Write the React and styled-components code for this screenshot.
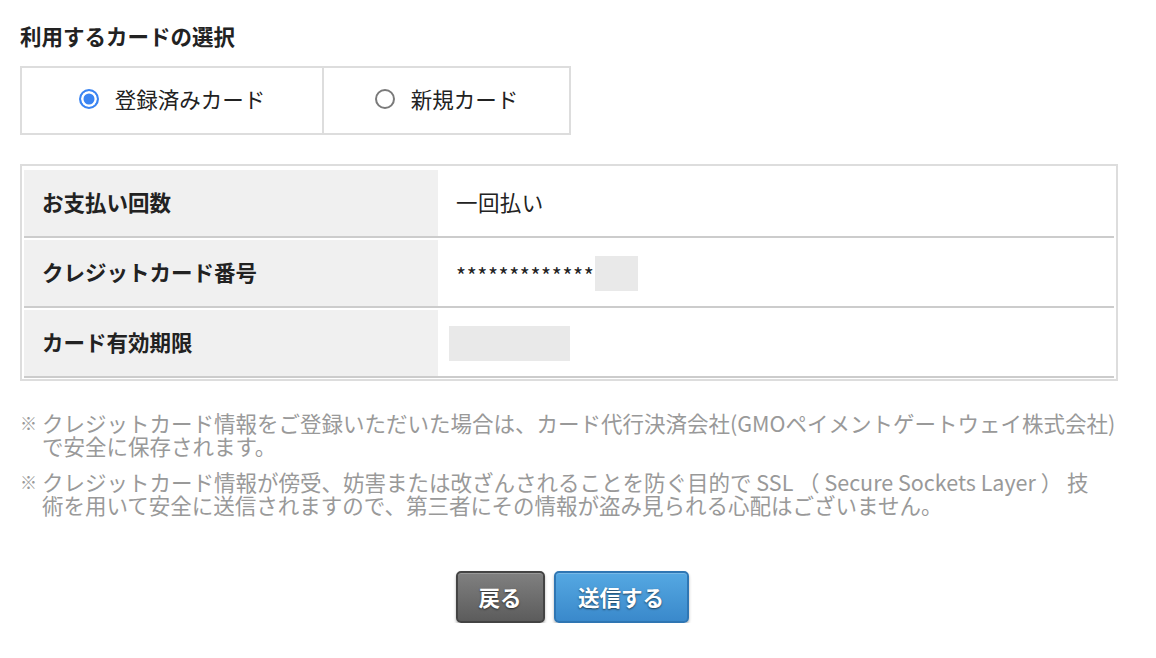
import React, { useState } from "react";
import styled, { createGlobalStyle } from "styled-components";

const GlobalStyle = createGlobalStyle`
  body {
    margin: 0;
    background: #fff;
    font-family: "Noto Sans CJK JP", "Noto Sans", sans-serif;
    color: #222;
  }
`;

const rows = [
  { label: "お支払い回数", value: "一回払い" },
  { label: "クレジットカード番号", value: "*************", masked: 43, shift: 1 },
  { label: "カード有効期限", value: "", masked: 121, shift: -7 },
];

const App = () => {
  const [cardType, setCardType] = useState("saved");

  return (
    <>
      <GlobalStyle />
      <Page>
        <Heading>利用するカードの選択</Heading>
        <RadioGroup>
          <RadioCell width={300} onClick={() => setCardType("saved")}>
            <RadioMark checked={cardType === "saved"} />
            <RadioLabel>登録済みカード</RadioLabel>
          </RadioCell>
          <RadioCell width={247} onClick={() => setCardType("new")}>
            <RadioMark checked={cardType === "new"} />
            <RadioLabel>新規カード</RadioLabel>
          </RadioCell>
        </RadioGroup>

        <InfoTable>
          {rows.map(row => (
            <Row key={row.label}>
              <LabelCell>{row.label}</LabelCell>
              <ValueCell>
                {row.value && <Value>{row.value}</Value>}
                {row.masked && <Masked width={row.masked} shift={row.shift} />}
              </ValueCell>
            </Row>
          ))}
        </InfoTable>

        <Notes>
          <Note>
            <NoteMark>※</NoteMark>
            <NoteText>
              クレジットカード情報をご登録いただいた場合は、カード代行決済会社(GMOペイメントゲートウェイ株式会社)
              <br />
              で安全に保存されます。
            </NoteText>
          </Note>
          <Note>
            <NoteMark>※</NoteMark>
            <NoteText>
              クレジットカード情報が傍受、妨害または改ざんされることを防ぐ目的で SSL （ Secure Sockets Layer ） 技
              <br />
              術を用いて安全に送信されますので、第三者にその情報が盗み見られる心配はございません。
            </NoteText>
          </Note>
        </Notes>

        <Actions>
          <Button variant="back" width={89}>戻る</Button>
          <Button variant="submit" width={135}>送信する</Button>
        </Actions>
      </Page>
    </>
  );
};

const Page = styled.div`
  width: 1098px;
  padding: 21px 0 0 20px;
`;

const Heading = styled.h2`
  margin: 0;
  font-size: 21.5px;
  line-height: 29px;
  font-weight: bold;
  color: #222;
`;

const RadioGroup = styled.div`
  display: flex;
  width: fit-content;
  margin-top: 16px;
  border: 2px solid #ddd;
`;

const RadioCell = styled.label`
  display: flex;
  align-items: center;
  justify-content: center;
  gap: 16px;
  width: ${props => props.width}px;
  height: 65px;
  padding-bottom: 4px;
  box-sizing: border-box;
  cursor: pointer;

  & + & {
    border-left: 2px solid #ddd;
  }
`;

const RadioMark = styled.span`
  box-sizing: border-box;
  width: 20px;
  height: 20px;
  border-radius: 50%;
  border: 2px solid ${props => (props.checked ? "#3a84f2" : "#7a7a7a")};
  background: ${props => (props.checked ? "#3a84f2" : "#fff")};
  box-shadow: ${props => (props.checked ? "inset 0 0 0 2.5px #fff" : "none")};
`;

const RadioLabel = styled.span`
  font-size: 21.5px;
  color: #222;
`;

const InfoTable = styled.div`
  display: flex;
  flex-direction: column;
  gap: 2px;
  margin-top: 29px;
  border: 2px solid #ddd;
  padding: 4px 2px 1px;
`;

const Row = styled.div`
  display: grid;
  grid-template-columns: 414px 1fr;
  height: 66px;
  border-bottom: 2px solid #ccc;
`;

const LabelCell = styled.div`
  display: flex;
  align-items: center;
  padding: 0 0 4px 18px;
  background: #f0f0f0;
  font-size: 21.5px;
  font-weight: bold;
  color: #222;
`;

const ValueCell = styled.div`
  display: flex;
  align-items: center;
  padding: 0 0 4px 18px;
  font-size: 21.5px;
  color: #222;
`;

const Value = styled.span`
  letter-spacing: 0.4px;

  /* masked card number: asterisks sit a little lower and looser */
  &:has(+ span) {
    letter-spacing: 0.6px;
    margin-top: 6px;
  }
`;

const Masked = styled.span`
  display: inline-block;
  width: ${props => props.width}px;
  height: 35px;
  margin: 4px 0 0 ${props => props.shift || 0}px;
  background: #e9e9e9;
`;

const Notes = styled.div`
  margin-top: 30px;
  display: flex;
  flex-direction: column;
  gap: 13px;
`;

const Note = styled.div`
  display: flex;
  font-size: 21.5px;
  line-height: 23px;
  color: #999;
`;

const NoteMark = styled.span`
  flex: 0 0 22px;
  font-size: 17px;
`;

const NoteText = styled.p`
  margin: 0;
  white-space: nowrap;
`;

const Actions = styled.div`
  display: flex;
  justify-content: center;
  gap: 9px;
  margin-top: 55px;
  padding-left: 6px;
`;

const Button = styled.button`
  width: ${props => props.width}px;
  height: 52px;
  padding: 0 0 2px;
  border-radius: 5px;
  border: 2px solid ${props => (props.variant === "back" ? "#444" : "#2f76b3")};
  background: ${props =>
    props.variant === "back"
      ? "linear-gradient(#808080, #5c5c5c)"
      : "linear-gradient(#55a8e2, #3a89cb)"};
  box-shadow: 0 2px 3px rgba(0, 0, 0, 0.3), inset 0 1px 0 rgba(255, 255, 255, 0.2);
  color: #fff;
  font-family: inherit;
  font-size: 21.5px;
  font-weight: bold;
  text-shadow: 0 1px 2px rgba(0, 0, 0, 0.6);
  cursor: pointer;
`;

export default App;
